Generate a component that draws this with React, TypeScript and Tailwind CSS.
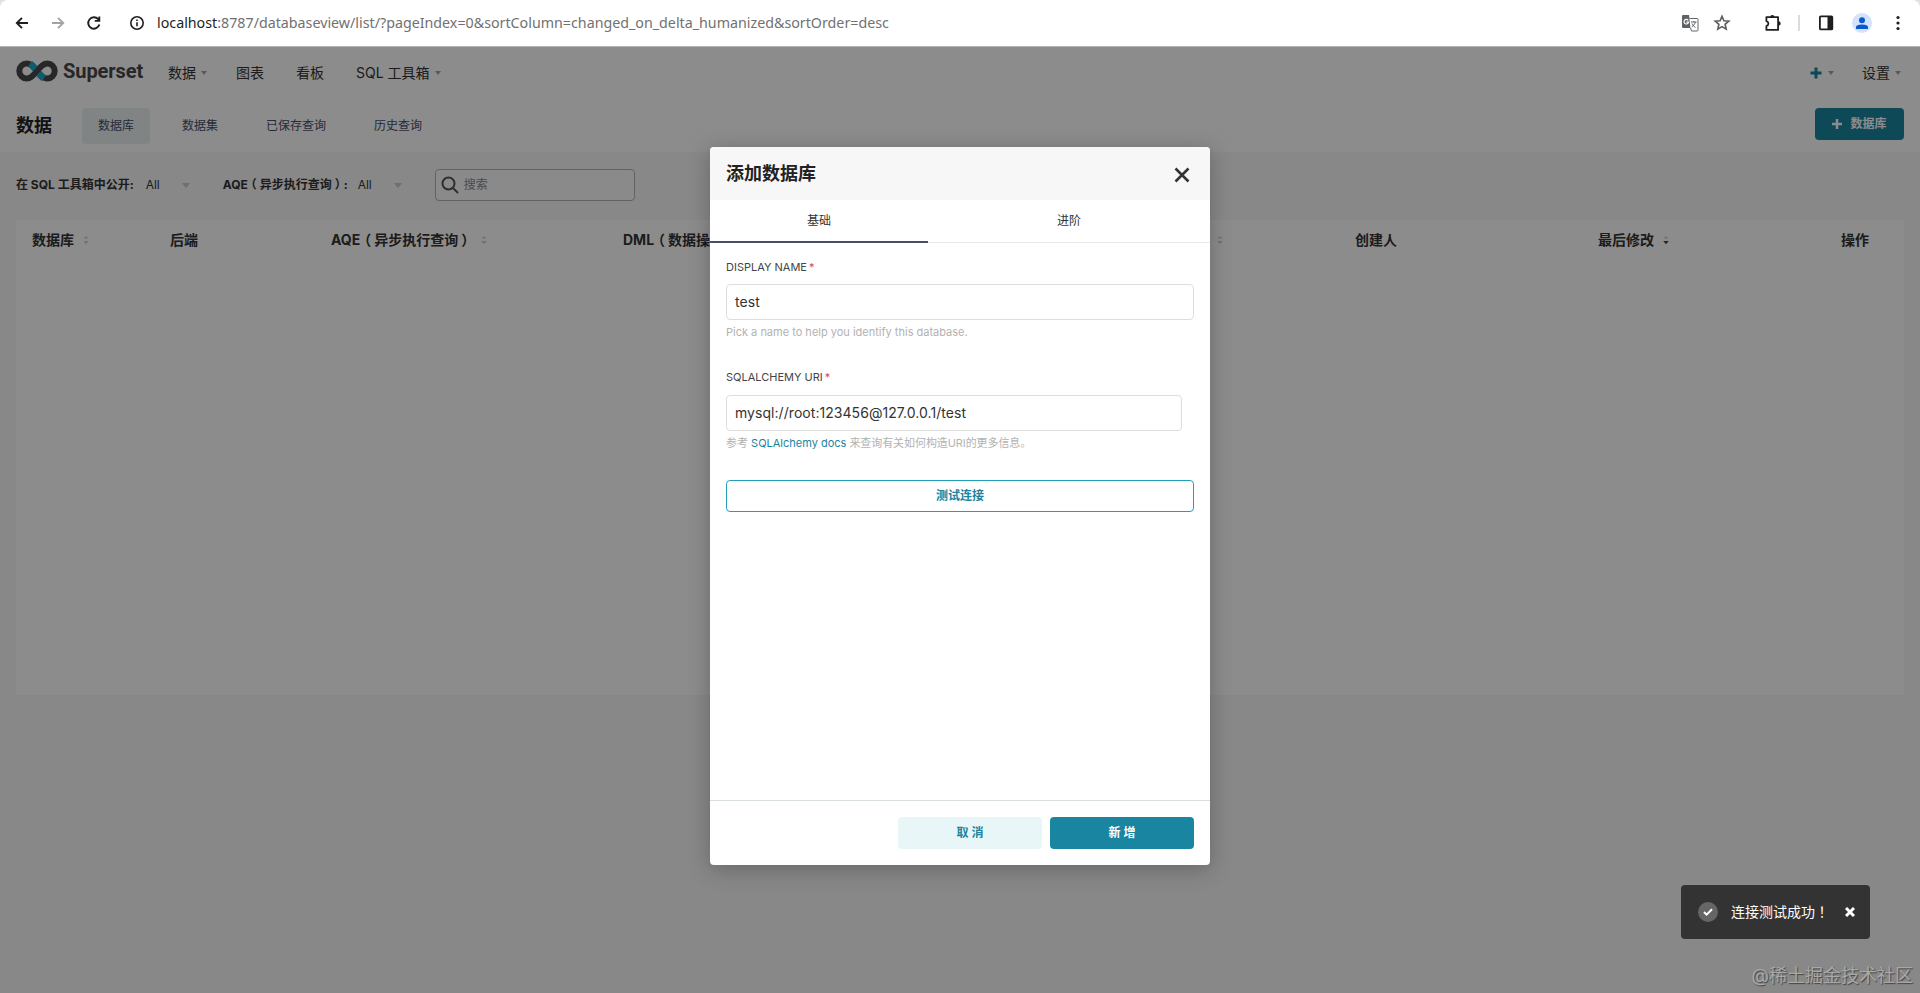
import React from "react";
import type { ReactNode } from "react";

const caret = (
  <svg width="6" height="4" viewBox="0 0 6 4" className="shrink-0"><path d="M0 0h6L3 4z" fill="#a3a3a3" /></svg>
);

const selectCaret = (
  <svg width="8" height="5" viewBox="0 0 8 5" className="shrink-0"><path d="M0 0h8L4 5z" fill="#c9c9c9" /></svg>
);

function BrowserBar() {
  return (
    <div className="bg-[#dfe3e8]">
      <div className="flex h-[47px] shrink-0 items-center rounded-t-lg border-b border-[#b4b4b4] bg-white text-[#1f1f1f]">
        <div className="flex w-[157px] shrink-0 items-center">
          <svg className="ml-3.5" width="16" height="16" viewBox="0 0 16 16" fill="none" stroke="#1f1f1f" strokeWidth="1.900"><path d="M14 8H3.200M8 2.800L2.800 8L8 13.200" /></svg>
          <svg className="ml-5" width="16" height="16" viewBox="0 0 16 16" fill="none" stroke="#a3a3a3" strokeWidth="1.900"><path d="M2 8h10.800M8 2.800L13.200 8L8 13.200" /></svg>
          <svg className="ml-5" width="16" height="16" viewBox="0 0 16 16" fill="none" stroke="#1f1f1f" strokeWidth="1.900"><path d="M13.400 9.600A5.700 5.700 0 1 1 12.200 4.200L13.300 5.400M13.300 1.600v4.300H8.800" /></svg>
          <svg className="ml-[27px]" width="16" height="16" viewBox="0 0 16 16" fill="none" stroke="#1f1f1f" strokeWidth="1.600"><circle cx="8" cy="8" r="6.200" /><path d="M8 7.200v4M8 4.400v1.500" /></svg>
        </div>
        <div className="font-['Noto_Sans'] text-[14.250px] whitespace-nowrap text-[#717171]">
          <span className="text-[#1f1f1f]">localhost</span>:8787/databaseview/list/?pageIndex=0&amp;sortColumn=changed_on_delta_humanized&amp;sortOrder=desc
        </div>
        <div className="ml-auto flex items-center">
          <svg width="18" height="18" viewBox="0 0 18 18">
            <path d="M2 1h6l2 13H2q-1 0-1-1V2q0-1 1-1z" fill="#5f6368" />
            <path d="M8.500 4.500H16q1 0 1 1V16q0 1-1 1h-5.500L9.500 14" fill="#fff" stroke="#666" />
            <path d="M7.200 6.300A2.300 2.300 0 1 0 7.600 8.200H5.400" stroke="#fff" strokeWidth="1.200" fill="none" />
            <path d="M10 8h5.500M12.700 7v1M14.500 8q-.8 3-3.800 5M11 9.500q1 2.500 3.500 4" stroke="#666" fill="none" />
          </svg>
          <svg className="ml-3.5" width="18" height="18" viewBox="0 0 18 18" fill="none" stroke="#5c5c5c" strokeWidth="1.600"><path d="M9 2.200l1.900 4.500 4.900.4-3.700 3.200 1.100 4.800L9 12.600l-4.200 2.500 1.100-4.800-3.700-3.200 4.900-.4z" /></svg>
          <svg className="ml-[33px]" width="18" height="18" viewBox="0 0 18 18"><path d="M2.400 3.200H14.100V15.900H2.400V12q2-.6 2-2.400T2.400 7.200z" fill="none" stroke="#1f1f1f" strokeWidth="1.800" strokeLinejoin="round" /><path d="M6.200 3a2.100 2.100 0 0 1 4.200 0zM14.500 7.200a2.200 2.200 0 0 1 0 4.400z" fill="#1f1f1f" /></svg>
          <div className="ml-4 h-4 w-0.5 bg-[#dcdcdc]" />
          <svg className="ml-[18px]" width="16" height="16" viewBox="0 0 16 16"><rect x="1.900" y="1.400" width="12.400" height="13" rx="1" fill="none" stroke="#1f1f1f" strokeWidth="1.800" /><path d="M9.500 1.500h5v13h-5z" fill="#1f1f1f" /></svg>
          <div className="ml-[18px] flex size-5 items-center justify-center rounded-full bg-[#d3e3fd]">
            <svg width="14" height="14" viewBox="0 0 14 14" fill="#0b57d0"><circle cx="7" cy="4.200" r="3" /><path d="M1 13v-2q0-2.500 6-2.500t6 2.500v2z" /></svg>
          </div>
          <svg className="mr-5 ml-[24px]" width="4" height="16" viewBox="0 0 4 16" fill="#1f1f1f"><circle cx="2" cy="2.500" r="1.600" /><circle cx="2" cy="8" r="1.600" /><circle cx="2" cy="13.500" r="1.600" /></svg>
        </div>
      </div>
    </div>
  );
}

function Logo() {
  return (
    <div className="mb-[3px] flex w-[128px] shrink-0 items-center gap-[5px]">
      <svg className="shrink-0" width="42" height="22" viewBox="0 0 42 22" fill="none" strokeWidth="6">
        <path d="M21 11C17 5.800 14.500 3.500 10.800 3.500a7.500 7.500 0 0 0 0 15C14.500 18.500 17 16.200 21 11S27.500 3.500 31.200 3.500a7.500 7.500 0 0 1 0 15C27.500 18.500 25 16.200 21 11z" stroke="#484848" />
        <path d="M14 3.600C16.600 5.300 19 8.500 21 11S25.400 16.700 28 18.400" stroke="#20a7c9" strokeWidth="6.800" />
        <path d="M13 18.200C16.500 16.500 19 13.500 21 11S25.500 5.500 29 3.800" stroke="#484848" strokeWidth="5.400" />
      </svg>
      <span className="origin-left scale-x-[0.955] font-[Roboto] text-[21px] leading-6 font-bold tracking-[-0.1px] text-[#484848]">Superset</span>
    </div>
  );
}

function Sorter({ active = false }: { active?: boolean }) {
  return (
    <svg width="8" height="10" viewBox="0 0 8 10" className="shrink-0">
      <path d="M4 1l2.500 2.500h-5z" fill="#cfcfcf" />
      <path d="M1.200 6h5.600L4 9.200z" fill={active ? "#444" : "#cfcfcf"} />
    </svg>
  );
}

function Parens({ children }: { children: ReactNode }) {
  return (
    <>
      <span className="mr-[3px] -ml-[3px]">（</span>
      {children}
      <span className="-mr-[3px] ml-[3px]">）</span>
    </>
  );
}

function Th({ w, children, sort }: { w: string; children?: ReactNode; sort?: "idle" | "desc" }) {
  return (
    <div className={w + " flex shrink-0 items-center gap-2 whitespace-nowrap"}>
      <span>{children}</span>
      {sort && <Sorter active={sort === "desc"} />}
    </div>
  );
}

function Page() {
  return (
    <div className="flex h-full flex-col bg-[#f7f7f7] text-[#333]">
      <div className="flex h-[51px] shrink-0 items-center bg-white pr-[19px] pl-4 text-sm">
        <Logo />
        <div className="ml-6 flex items-center gap-[5px]">数据 {caret}</div>
        <div className="ml-[29px]">图表</div>
        <div className="ml-8">看板</div>
        <div className="ml-8 flex items-center gap-[5px]"><span>SQL 工具箱</span>{caret}</div>
        <div className="ml-auto flex items-center gap-1.5">
          <svg width="12" height="12" viewBox="0 0 12 12" stroke="#1a85a0" strokeWidth="3"><path d="M6 .5v11M.5 6h11" /></svg>
          {caret}
        </div>
        <div className="ml-[28px] flex items-center gap-[5px]">设置 {caret}</div>
      </div>
      <div className="flex h-[54px] shrink-0 items-center bg-white pt-0.5 pr-4 pl-4 text-xs text-[#484d68]">
        <div className="w-[66px] text-lg font-bold text-[#222]">数据</div>
        <div className="flex h-9 items-center rounded-sm bg-[#e9f1f3] px-4">数据库</div>
        <div className="ml-8">数据集</div>
        <div className="ml-12">已保存查询</div>
        <div className="ml-12">历史查询</div>
        <div className="mb-1 ml-auto flex h-8 w-[89px] items-center justify-center gap-2 rounded bg-[#1a85a0] font-bold text-white">
          <svg width="10" height="10" viewBox="0 0 10 10" stroke="#fff" strokeWidth="2.500"><path d="M5 0v10M0 5h10" /></svg>
          数据库
        </div>
      </div>
      <div className="flex h-[68px] shrink-0 items-center pb-0.5 pl-4 text-xs">
        <span className="font-bold whitespace-nowrap">在 SQL 工具箱中公开:</span>
        <span className="ml-3 w-9">All</span>
        {selectCaret}
        <span className="ml-[33px] w-[127px] font-bold whitespace-nowrap">AQE<Parens>异步执行查询</Parens>:</span>
        <span className="ml-2 w-9">All</span>
        {selectCaret}
        <div className="mb-px ml-[33px] flex h-8 w-[200px] items-center gap-[5px] rounded border border-[#b3b3b3] bg-white/50 pl-[5px] text-[#888]">
          <svg width="18" height="18" viewBox="0 0 18 18" fill="none" stroke="#555" strokeWidth="2"><circle cx="7.500" cy="7.500" r="6" /><path d="M12 12l5 5" /></svg>
          搜索
        </div>
      </div>
      <div className="mx-4 h-[475px] shrink-0 bg-white">
        <div className="flex h-10 items-center pl-4 text-sm font-bold">
          <Th w="w-[138px]" sort="idle">数据库</Th>
          <Th w="w-[161px]">后端</Th>
          <Th w="w-[292px]"><span className="flex items-center"><span className="w-[149px]">AQE<Parens>异步执行查询</Parens></span><Sorter /></span></Th>
          <Th w="w-[300px]">DML<Parens>数据操作语言</Parens></Th>
          <Th w="w-[432px]"><span className="inline-flex w-[301px] items-center justify-end gap-2">CSV 上传<Sorter /></span></Th>
          <Th w="w-[243px]">创建人</Th>
          <Th w="w-[243px]" sort="desc">最后修改</Th>
          <Th w="w-[40px]">操作</Th>
        </div>
      </div>
    </div>
  );
}

function Label({ children }: { children: ReactNode }) {
  return <div className="flex gap-0.5 text-[11px] leading-4 text-[#444]"><span>{children}</span><span className="text-[#e04355]">*</span></div>;
}

function Modal() {
  return (
    <div className="flex h-[718px] w-[500px] flex-col overflow-hidden rounded-sm bg-white text-[#333] shadow-[0_4px_22px_rgba(0,0,0,0.25)]">
      <div className="flex h-[53px] shrink-0 items-center justify-between bg-[#f7f7f7] pr-5 pl-4">
        <div className="text-lg font-bold text-[#222]">添加数据库</div>
        <svg className="mt-0.5" width="16" height="16" viewBox="0 0 16 16" stroke="#333" strokeWidth="2.600"><path d="M1.500 1.500l13 13M14.500 1.500l-13 13" /></svg>
      </div>
      <div className="flex h-[43px] shrink-0 border-b border-[#ebebeb] text-xs">
        <div className="-mb-px flex w-[218px] items-center justify-center border-b-2 border-[#484d68]">基础</div>
        <div className="flex flex-1 items-center justify-center">进阶</div>
      </div>
      <div className="flex flex-1 flex-col px-4 pt-4">
        <Label>DISPLAY NAME</Label>
        <div className="mt-[9px] flex h-9 shrink-0 items-center rounded border border-[#dedede] px-2 text-sm tracking-[0.050px]">test</div>
        <div className="mt-1 text-[11px] leading-4 text-[#b2b2b2]">Pick a name to help you identify this database.</div>
        <div className="mt-[29px]"><Label>SQLALCHEMY URI</Label></div>
        <div className="mt-[10px] mr-3 flex h-9 shrink-0 items-center rounded border border-[#dedede] px-2 text-sm tracking-[0.050px]">mysql://root:123456@127.0.0.1/test</div>
        <div className="mt-1 text-[11px] leading-4 text-[#b2b2b2]">参考 <span className="text-[#1a85a0]">SQLAlchemy docs</span><span className="tracking-[-0.080px]"> 来查询有关如何构造URI的更多信息。</span></div>
        <div className="mt-[29px] flex h-8 shrink-0 items-center justify-center rounded border border-[#20a0b8] text-xs font-bold text-[#1a85a0]">测试连接</div>
      </div>
      <div className="flex h-[65px] shrink-0 items-center justify-end gap-2 border-t border-[#d9dfdf] pr-4 text-xs font-bold">
        <div className="flex h-8 w-36 items-center justify-center rounded bg-[#e9f6f8] text-[#1a85a0]">取 消</div>
        <div className="flex h-8 w-36 items-center justify-center rounded bg-[#1a85a0] text-white">新 增</div>
      </div>
    </div>
  );
}

export default function App() {
  return (
    <div className="flex h-[993px] w-[1920px] flex-col overflow-hidden bg-[#dedede] font-[Inter,'Noto_Sans_CJK_SC',sans-serif]">
      <BrowserBar />
      <div className="relative min-h-0 flex-1">
        <Page />
        <div className="absolute inset-0 flex justify-center bg-black/45 pt-[100px]"><Modal /></div>
        <div className="absolute top-[838px] left-[1681px] flex h-[54px] w-[189px] items-center rounded bg-[#333] pl-[17px] text-sm text-white">
          <div className="flex size-5 items-center justify-center rounded-full bg-[#666]">
            <svg width="10" height="8" viewBox="0 0 10 8" fill="none" stroke="#fff" strokeWidth="2"><path d="M1 4l2.600 2.600L9 1.200" /></svg>
          </div>
          <span className="mb-0.5 ml-[13px] w-[114px] whitespace-nowrap">连接测试成功<span className="font-['Noto_Sans_CJK_TC']">！</span></span>
          <svg width="10" height="10" viewBox="0 0 10 10" stroke="#fff" strokeWidth="3"><path d="M1 1l8 8M9 1L1 9" /></svg>
        </div>
        <div className="absolute right-[7px] bottom-[5px] text-[18px] leading-6 whitespace-nowrap text-[#a8a8a8] [text-shadow:1px_1px_1px_#444]">@稀土掘金技术社区</div>
      </div>
    </div>
  );
}
